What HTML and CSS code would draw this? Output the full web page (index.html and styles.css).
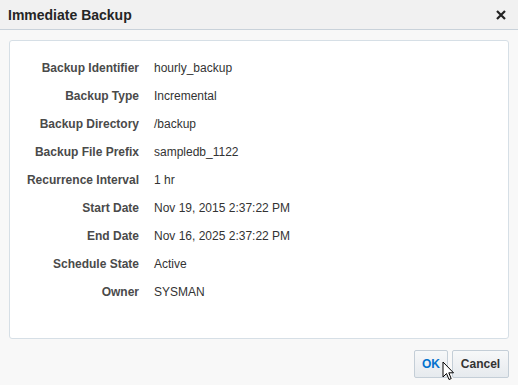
FILE: index.html
```html
<!DOCTYPE html>
<html lang="en">
<head>
    <meta charset="UTF-8">
    <meta name="viewport" content="width=device-width, initial-scale=1.0">
    <title>Immediate Backup</title>
    <link rel="stylesheet" href="styles.css">
</head>
<body>
    <div id="dialog">
        <div class="header">
            <span class="title">Immediate Backup</span>
            <svg class="close" width="10" height="10" viewBox="0 0 10 10">
                <path d="M1 1 L9 9 M9 1 L1 9" stroke="#222" stroke-width="2.2"/>
            </svg>
        </div>
        <div class="panel">
            <div class="grid">
                <span class="label">Backup Identifier</span><span class="value">hourly_backup</span>
                <span class="label">Backup Type</span><span class="value">Incremental</span>
                <span class="label">Backup Directory</span><span class="value">/backup</span>
                <span class="label">Backup File Prefix</span><span class="value">sampledb_1122</span>
                <span class="label">Recurrence Interval</span><span class="value">1 hr</span>
                <span class="label">Start Date</span><span class="value">Nov 19, 2015 2:37:22 PM</span>
                <span class="label">End Date</span><span class="value">Nov 16, 2025 2:37:22 PM</span>
                <span class="label">Schedule State</span><span class="value">Active</span>
                <span class="label">Owner</span><span class="value">SYSMAN</span>
            </div>
        </div>
        <div class="footer">
            <button class="btn ok">OK</button>
            <button class="btn cancel">Cancel</button>
        </div>
        <svg class="cursor" width="13" height="21" viewBox="0 0 13 21">
            <path d="M1 1 L1 16 L4.5 12.5 L7 18.5 L9.2 17.6 L6.8 11.8 L11.5 11.8 Z" fill="#fff" stroke="#000" stroke-width="1" stroke-linejoin="miter"/>
        </svg>
    </div>
</body>
</html>
```

FILE: styles.css
```css
body {
    margin: 0;
    background-color: #f8f8f8;
    font-family: "Liberation Sans", Arial, sans-serif;
    font-size: 12px;
    color: #333;
}

#dialog {
    position: relative;
    width: 518px;
    height: 385px;
    overflow: hidden;
}

.header {
    height: 29px;
    display: flex;
    align-items: center;
    justify-content: space-between;
    padding: 0 12px 0 8px;
    background-color: #f1f1f1;
    border-bottom: 1px solid #c9d2da;
}

.title {
    font-size: 14px;
    font-weight: bold;
    color: #252525;
}

.panel {
    margin: 10px 9px 0 9px;
    height: 297px;
    background-color: #fff;
    border: 1px solid #d6dfe6;
    border-radius: 3px;
}

.grid {
    display: grid;
    grid-template-columns: 129px auto;
    grid-auto-rows: 28px;
    column-gap: 15px;
    padding-top: 13px;
    align-items: center;
}

.label {
    text-align: right;
    font-weight: bold;
    color: #4a4a4a;
}

.value {
    color: #333;
}

.footer {
    display: flex;
    justify-content: flex-end;
    gap: 4px;
    margin: 11px 9px 0 0;
}

.btn {
    height: 28px;
    padding: 0;
    font-family: "Liberation Sans", Arial, sans-serif;
    font-size: 12px;
    font-weight: bold;
    color: #333;
    background: linear-gradient(#f7f8f9, #e6eaee);
    border: 1px solid #c4ced7;
    border-radius: 2px;
}

.btn.ok {
    width: 34px;
    color: #0572ce;
}

.btn.cancel {
    width: 57px;
}

.cursor {
    position: absolute;
    left: 442px;
    top: 361px;
}
```
